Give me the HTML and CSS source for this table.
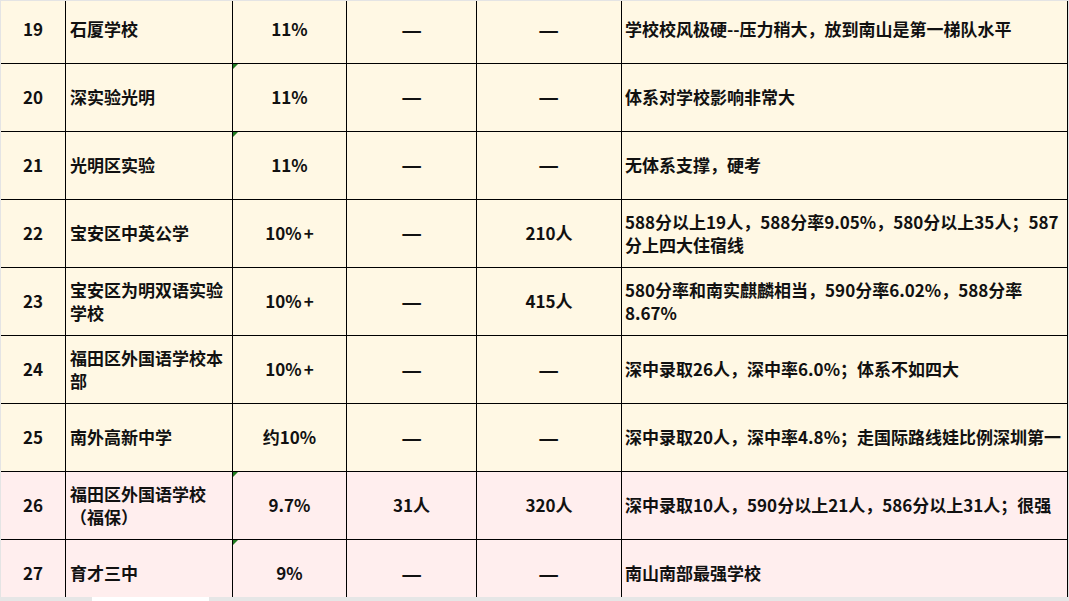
FILE: index.html
```html
<!DOCTYPE html>
<html lang="zh-CN">
<head>
<meta charset="utf-8">
<title>学校统计表</title>
<link rel="stylesheet" href="styles.css">
</head>
<body>
<div class="frame">
  <div class="sheet">
    <div class="cell c-num">19</div>
    <div class="cell c-name">石厦学校</div>
    <div class="cell c-mid">11%</div>
    <div class="cell c-mid"><span class="dash">—</span></div>
    <div class="cell c-mid"><span class="dash">—</span></div>
    <div class="cell c-note">学校校风极硬--压力稍大，放到南山是第一梯队水平</div>

    <div class="cell c-num">20</div>
    <div class="cell c-name">深实验光明</div>
    <div class="cell c-mid flag">11%</div>
    <div class="cell c-mid"><span class="dash">—</span></div>
    <div class="cell c-mid"><span class="dash">—</span></div>
    <div class="cell c-note">体系对学校影响非常大</div>

    <div class="cell c-num">21</div>
    <div class="cell c-name">光明区实验</div>
    <div class="cell c-mid flag">11%</div>
    <div class="cell c-mid"><span class="dash">—</span></div>
    <div class="cell c-mid"><span class="dash">—</span></div>
    <div class="cell c-note">无体系支撑，硬考</div>

    <div class="cell c-num">22</div>
    <div class="cell c-name">宝安区中英公学</div>
    <div class="cell c-mid">10%<span class="plus">+</span></div>
    <div class="cell c-mid"><span class="dash">—</span></div>
    <div class="cell c-mid">210人</div>
    <div class="cell c-note">588分以上19人，588分率9.05%，580分以上35人；587<br>分上四大住宿线</div>

    <div class="cell c-num">23</div>
    <div class="cell c-name">宝安区为明双语实验<br>学校</div>
    <div class="cell c-mid">10%<span class="plus">+</span></div>
    <div class="cell c-mid"><span class="dash">—</span></div>
    <div class="cell c-mid">415人</div>
    <div class="cell c-note">580分率和南实麒麟相当，590分率6.02%，588分率<br>8.67%</div>

    <div class="cell c-num">24</div>
    <div class="cell c-name">福田区外国语学校本<br>部</div>
    <div class="cell c-mid">10%<span class="plus">+</span></div>
    <div class="cell c-mid"><span class="dash">—</span></div>
    <div class="cell c-mid"><span class="dash">—</span></div>
    <div class="cell c-note">深中录取26人，深中率6.0%；体系不如四大</div>

    <div class="cell c-num">25</div>
    <div class="cell c-name">南外高新中学</div>
    <div class="cell c-mid">约10%</div>
    <div class="cell c-mid"><span class="dash">—</span></div>
    <div class="cell c-mid"><span class="dash">—</span></div>
    <div class="cell c-note">深中录取20人，深中率4.8%；走国际路线娃比例深圳第一</div>

    <div class="cell c-num pink">26</div>
    <div class="cell c-name pink">福田区外国语学校<br>（福保）</div>
    <div class="cell c-mid pink flag">9.7%</div>
    <div class="cell c-mid pink">31人</div>
    <div class="cell c-mid pink">320人</div>
    <div class="cell c-note pink">深中录取10人，590分以上21人，586分以上31人；很强</div>

    <div class="cell c-num pink">27</div>
    <div class="cell c-name pink">育才三中</div>
    <div class="cell c-mid pink flag">9%</div>
    <div class="cell c-mid pink"><span class="dash">—</span></div>
    <div class="cell c-mid pink"><span class="dash">—</span></div>
    <div class="cell c-note pink">南山南部最强学校</div>
  </div>
</div>
<div class="hbar"><div class="thumb"></div></div>
</body>
</html>
```

FILE: styles.css
```css
html, body {
  margin: 0;
  padding: 0;
}
body {
  background: #e4e4e4;
  width: 1069px;
  height: 601px;
  overflow: hidden;
  font-family: "Noto Sans CJK SC", "Noto Sans", sans-serif;
  font-weight: 700;
  font-size: 17px;
  color: #111;
}
.frame {
  margin: 1px 0 0 1px;
  width: 1067px;
  height: 596px;
  overflow: hidden;
  background: #fff;
}
.sheet {
  margin-top: -5px;
  display: grid;
  grid-template-columns: 65px 167px 114px 130px 145px 446px;
  grid-auto-rows: 68px;
}
.cell {
  box-sizing: border-box;
  border-right: 1px solid #000;
  border-bottom: 1px solid #000;
  background: #fff8e4;
  display: flex;
  align-items: center;
  line-height: 23px;
  padding-bottom: 2px;
  position: relative;
}
.cell.pink {
  background: #ffeeee;
}
.c-num, .c-mid {
  justify-content: center;
  text-align: center;
}
.c-name {
  padding-left: 4px;
  padding-right: 4px;
}
.c-note {
  padding-left: 3px;
  padding-right: 4px;
}
.dash {
  display: inline-block;
  transform: scale(1.35, 1.2);
}
.plus {
  margin-left: 2px;
}
.flag::before {
  content: "";
  position: absolute;
  left: 0;
  top: 0;
  width: 0;
  height: 0;
  border-top: 5px solid #1f7a1f;
  border-right: 5px solid transparent;
}
.hbar {
  height: 4px;
  background: #e6e6e6;
}
.thumb {
  margin-left: 92px;
  width: 117px;
  height: 4px;
  background: #ffffff;
}
```
